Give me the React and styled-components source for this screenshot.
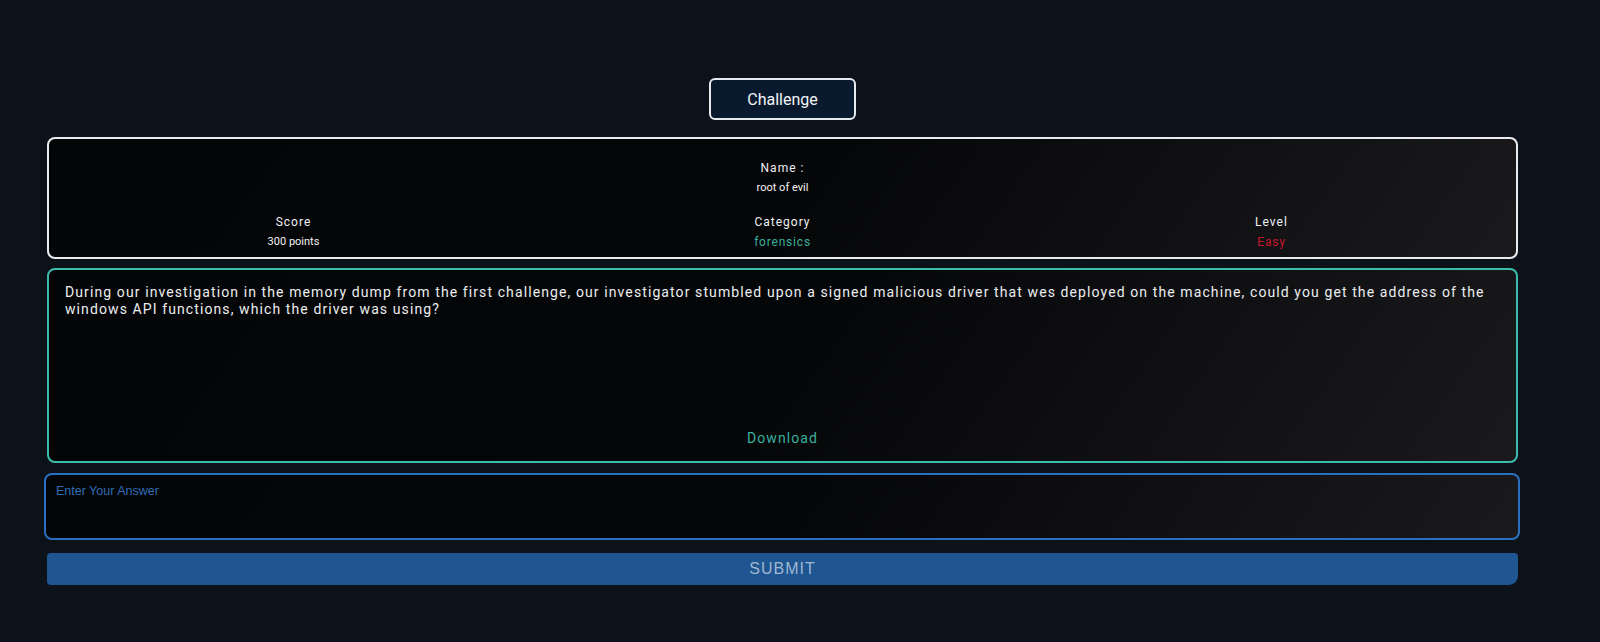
import React from "react";
import styled, { createGlobalStyle } from "styled-components";

const GlobalStyle = createGlobalStyle`
  html, body {
    margin: 0;
    padding: 0;
    background: #0b121a;
    font-family: Roboto, "Liberation Sans", sans-serif;
  }
  * {
    box-sizing: border-box;
  }
`;

const Page = styled.div`
  min-height: 642px;
  background: #0b121a;
  padding: 78px 0 0 47px;
`;

const Column = styled.div`
  width: 1471px;
  display: flex;
  flex-direction: column;
  align-items: center;
`;

const TitleBox = styled.div`
  width: 147px;
  height: 42px;
  border: 2px solid #e6e9ee;
  border-radius: 6px;
  background: #0a1a2e;
  color: #f2f4f7;
  font-size: 16px;
  display: flex;
  align-items: center;
  justify-content: center;
  margin-bottom: 17px;
`;

const Card = styled.div`
  width: 100%;
  border: 2px solid ${(props) => props.border};
  border-radius: 8px;
  background: linear-gradient(125deg, #040506 0%, #050607 50%, #1a1a1c 100%);
`;

const InfoCard = styled(Card)`
  height: 122px;
  padding: 19px 0 0;
  margin-bottom: 9px;
`;

const NameBlock = styled.div`
  display: flex;
  flex-direction: column;
  align-items: center;
  margin-bottom: 14px;
`;

const StatsRow = styled.div`
  display: grid;
  grid-template-columns: 1fr 1fr 1fr;
`;

const Stat = styled.div`
  display: flex;
  flex-direction: column;
  align-items: center;
`;

const Label = styled.div`
  height: 20px;
  line-height: 20px;
  font-size: 12px;
  font-weight: 400;
  letter-spacing: 1px;
  color: #eef0f3;
`;

const Value = styled.div`
  height: 20px;
  line-height: 20px;
  font-size: ${(props) => (props.color ? "12px" : "11px")};
  letter-spacing: ${(props) => (props.color ? "0.8px" : "0")};
  color: ${(props) => props.color || "#f4f4f4"};
`;

const DescCard = styled(Card)`
  height: 195px;
  padding: 14px 16px 13px;
  margin-bottom: 10px;
  display: flex;
  flex-direction: column;
  justify-content: space-between;
`;

const Description = styled.p`
  margin: 0;
  font-size: 14px;
  line-height: 17px;
  letter-spacing: 1.1px;
  color: #eceef0;
`;

const DownloadLink = styled.a`
  align-self: center;
  height: 20px;
  line-height: 20px;
  font-size: 14px;
  letter-spacing: 1.1px;
  color: #3aaf9f;
  text-decoration: none;
  cursor: pointer;
`;

const AnswerField = styled.textarea`
  width: 1476px;
  height: 67px;
  margin: 0 0 13px -3px;
  align-self: flex-start;
  padding: 9px 10px;
  border: 2px solid #2b6fc0;
  border-radius: 8px;
  background: linear-gradient(125deg, #040506 0%, #050607 50%, #1a1a1c 100%);
  color: #e8e8e8;
  font-family: "Liberation Sans", Arial, sans-serif;
  font-size: 12.5px;
  resize: none;
  outline: none;

  &::placeholder {
    color: #2f6db8;
    opacity: 1;
  }
`;

const SubmitButton = styled.button`
  width: 100%;
  height: 32px;
  border: none;
  border-radius: 4px 4px 9px 4px;
  background: #1f5590;
  color: #9fb7d2;
  font-family: "Liberation Sans", Arial, sans-serif;
  font-size: 16px;
  letter-spacing: 1px;
  cursor: pointer;
`;

const App = () => {
  const challenge = {
    name: "root of evil",
    score: "300 points",
    category: "forensics",
    level: "Easy",
    description:
      "During our investigation in the memory dump from the first challenge, our investigator stumbled upon a signed malicious driver that wes deployed on the machine, could you get the address of the windows API functions, which the driver was using?",
  };

  return (
    <>
      <GlobalStyle />
      <Page>
        <Column>
          <TitleBox>Challenge</TitleBox>

          <InfoCard border="#e9ebee">
            <NameBlock>
              <Label>Name :</Label>
              <Value>{challenge.name}</Value>
            </NameBlock>
            <StatsRow>
              <Stat>
                <Label>Score</Label>
                <Value>{challenge.score}</Value>
              </Stat>
              <Stat>
                <Label>Category</Label>
                <Value color="#3aaf9f">{challenge.category}</Value>
              </Stat>
              <Stat>
                <Label>Level</Label>
                <Value color="#c8142f">{challenge.level}</Value>
              </Stat>
            </StatsRow>
          </InfoCard>

          <DescCard border="#3cbcab">
            <Description>{challenge.description}</Description>
            <DownloadLink>Download</DownloadLink>
          </DescCard>

          <AnswerField placeholder="Enter Your Answer" />

          <SubmitButton>SUBMIT</SubmitButton>
        </Column>
      </Page>
    </>
  );
};

export default App;
